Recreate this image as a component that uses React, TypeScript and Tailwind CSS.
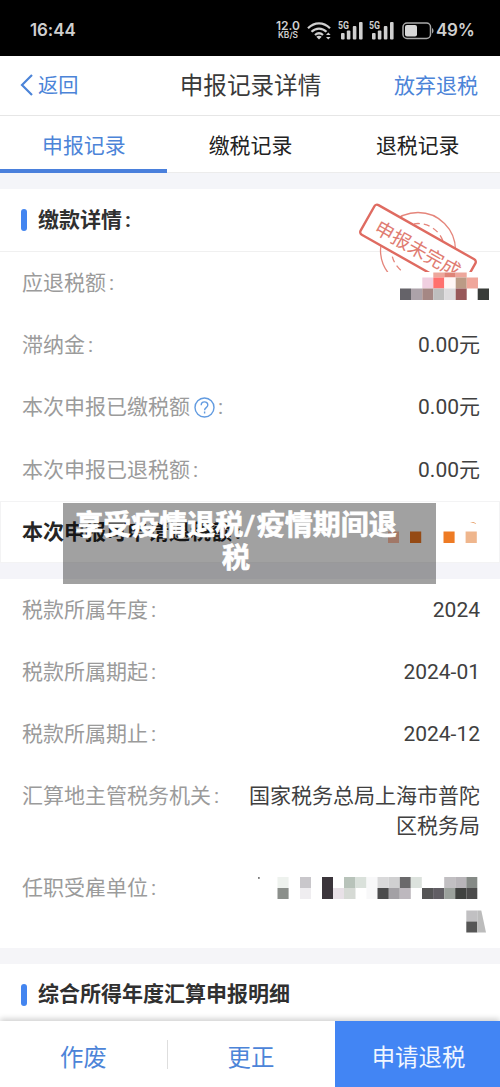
import type { ReactNode } from "react";

type Cell = [x: number, y: number, w: number, h: number, fill: string];

const PAYMENT_CELLS: Cell[] = [
  [33.3, 0, 11, 5, "#eda79c"],
  [44.3, 0, 11.4, 5, "#df8478"],
  [55.7, 0, 11, 5, "#eda79c"],
  [22.3, 5, 11, 11, "#f0cfe0"],
  [33.3, 5, 11, 11, "#ff706e"],
  [44.3, 5, 11.4, 11, "#fff6f5"],
  [55.7, 5, 11, 11, "#bb9b86"],
  [66.7, 5, 11.3, 11, "#f0a79b"],
  [0, 16, 11, 11.5, "#656369"],
  [11, 16, 11.3, 11.5, "#aca2a9"],
  [22.3, 16, 11, 11.5, "#a58784"],
  [33.3, 16, 11, 11.5, "#bebebe"],
  [44.3, 16, 11.4, 11.5, "#dddbdd"],
  [55.7, 16, 11, 11.5, "#98595a"],
  [77.7, 16, 11.3, 11.5, "#393c39"],
];

const COMPANY_CELLS: Cell[] = [
  [19.5, 0, 11.1, 11, "#eef2ee"],
  [42, 0, 11, 11, "#c9c7cb"],
  [64, 0, 11, 22, "#3b353b"],
  [86, 0, 11.5, 11, "#b8c3ba"],
  [97.5, 0, 11, 11, "#dae1db"],
  [108.5, 0, 11, 22, "#f8f8f9"],
  [119.5, 0, 11.3, 11, "#d9d9da"],
  [130.8, 0, 11, 11, "#d0d0d1"],
  [141.8, 0, 11, 11, "#6a696b"],
  [152.8, 0, 11, 11, "#dce2dd"],
  [186.2, 0, 11, 11, "#c1bfc2"],
  [197.2, 0, 11.1, 11, "#b8b5b9"],
  [208.3, 0, 11, 11, "#858a86"],
  [19.5, 11, 11.1, 11, "#8b8f8b"],
  [42, 11, 11, 11, "#efedf0"],
  [75, 11, 11, 11, "#e8e1e7"],
  [86, 11, 11.5, 11, "#d6dad5"],
  [119.5, 11, 11.3, 11, "#4b4b4c"],
  [130.8, 11, 11, 11, "#a3a1a5"],
  [141.8, 11, 11, 11, "#bdb8be"],
  [164, 11, 11.1, 11, "#555556"],
  [175.1, 11, 11.1, 11, "#615e64"],
  [186.2, 11, 11, 11, "#9ba19c"],
  [197.2, 11, 11.1, 11, "#404240"],
  [208.3, 11, 11, 11, "#4b4b4b"],
  [208.3, 33.5, 11, 11, "#c1c0c2"],
  [208.3, 44.5, 11, 11, "#565656"],
];

const REFUND_CELLS: Cell[] = [
  [0, 9.5, 11, 11.5, "#ffbfa5"],
  [22, 9.5, 11.2, 11.5, "#ec7621"],
  [55.5, 9.5, 11.1, 11.5, "#ee7b24"],
  [77.6, 9.5, 11.2, 11.5, "#efb68d"],
];

function Cells({ cells }: { cells: Cell[] }) {
  return (
    <>
      {cells.map(([x, y, width, height, fill], i) => (
        <rect key={i} x={x} y={y} width={width} height={height} fill={fill} />
      ))}
    </>
  );
}

function StatusBar() {
  return (
    <div className="flex h-14 items-center bg-black pt-[5px] pr-[26px] pl-[30px] text-[#cfcfcf]">
      <span className="flex-1 font-[Inter] text-[17px] font-semibold tracking-[-0.1px]">16:44</span>
      <div className="flex items-center">
        <div className="flex w-[26px] flex-col items-center font-[Inter] font-semibold">
          <span className="text-[12px] leading-[10px]">12.0</span>
          <span className="text-[8.4px] leading-[9px]">KB/S</span>
        </div>
        <svg className="ml-1.5" width="25" height="18" viewBox="0 0 25 18" fill="none" stroke="currentColor" strokeWidth="2.2">
          <path d="M1 6.2C7.5-.3 16.5-.3 23 6.2" />
          <path d="M4.5 9.8c4.5-4.3 10.5-4.3 15 0" />
          <path d="M8 13c2.6-2.3 5.4-2.3 8 0" />
          <path d="M9.3 14.7 12 17.4l2.7-2.7c-1.5-1.2-3.9-1.2-5.4 0Z" fill="currentColor" stroke="none" />
          <path d="m19 13 2.3-2.6L23.6 13Zm0 2h4.6l-2.3 2.6Z" fill="currentColor" stroke="none" />
        </svg>
        <Signal />
        <Signal />
        <svg className="ml-2" width="32" height="18" viewBox="0 0 32 18">
          <rect x="1" y="1" width="27.5" height="15.5" rx="4" fill="none" stroke="#a9a9a9" strokeWidth="1.5" />
          <rect x="3" y="3" width="12" height="11.5" rx="2" fill="#d8d8d8" />
          <path d="M30 6c2 1 2 4.5 0 5.5Z" fill="#a9a9a9" />
        </svg>
        <span className="ml-[2px] w-[38px] font-[Inter] text-[17px] font-semibold tracking-[-0.2px]">49%</span>
      </div>
    </div>
  );
}

function Signal() {
  return (
    <svg className="ml-[6px]" width="25" height="19" viewBox="0 0 25 19" fill="currentColor">
      <text x="0" y="8" fontSize="10.5" fontWeight="700" fontFamily="Roboto, sans-serif" textLength="11" lengthAdjust="spacingAndGlyphs">
        5G
      </text>
      <rect x="3" y="12" width="3.6" height="6.5" rx="1" />
      <rect x="8.8" y="9.5" width="3.6" height="9" rx="1" />
      <rect x="14.8" y="5" width="3.6" height="13.5" rx="1" />
      <rect x="21" y="1" width="3.6" height="17.5" rx="1" />
    </svg>
  );
}

function SectionTitle({ children }: { children: ReactNode }) {
  return (
    <div className="flex h-[62px] items-center pl-[21px] text-[21px] font-bold text-[#303030]">
      <span className="mr-[11px] h-[22px] w-[6px] rounded-full bg-[#4385f0]" />
      {children}
    </div>
  );
}

function Row({ label, help, children }: { label: string; help?: boolean; children?: ReactNode }) {
  return (
    <div className="flex min-h-[62px] justify-between py-4 pr-5 pl-[22px] text-[21px] leading-[30px]">
      <div className="flex shrink-0 items-center self-start text-[#9b9b9b]">
        {label}
        {help && (
          <svg className="ml-1" width="21" height="21" viewBox="0 0 21 21" fill="none" stroke="#629be0" strokeWidth="1.4">
            <circle cx="10.5" cy="10.5" r="9.5" />
            <path d="M7.2 8.3c0-4.6 6.6-4.5 6.6-.3 0 2.6-3.2 2.6-3.2 5.2M10.6 14.6v1.9" />
          </svg>
        )}
        <span className="ml-[3px]">:</span>
      </div>
      <div className="text-right text-[#404040]">{children}</div>
    </div>
  );
}

function Stamp() {
  return (
    <svg className="absolute top-[200px] left-[356px]" width="134" height="101" viewBox="0 0 134 101">
      <defs>
        <clipPath id="stamp">
          <rect width="134" height="72" />
        </clipPath>
      </defs>
      <g clipPath="url(#stamp)">
        <g fill="none" stroke="#e5857b" strokeWidth="1.3">
          <circle cx="62" cy="50" r="37.5" />
          <circle cx="62" cy="50" r="26.5" strokeDasharray="6 4" />
        </g>
        <g transform="translate(62 47) rotate(29.5)">
          <rect x="-58" y="-17" width="116" height="34" rx="3" fill="#fff" stroke="#df6b61" strokeWidth="2.4" />
          <text x="1" y="9" textAnchor="middle" fontSize="19" fill="#e07c72">
            申报未完成
          </text>
        </g>
      </g>
      <g transform="translate(44 72.5)">
        <Cells cells={PAYMENT_CELLS} />
      </g>
    </svg>
  );
}

export default function App() {
  return (
    <div className="relative flex h-[1087px] w-[500px] flex-col overflow-hidden bg-white font-[Roboto,'Noto_Sans_CJK_SC',sans-serif]">
      <StatusBar />

      {/* Nav */}
      <header className="grid h-[60px] grid-cols-[1fr_auto_1fr] items-center border-b border-[#e6e6e6] pr-[22px] pl-5 text-[#4c84d8]">
        <div className="flex items-center text-[20.2px]">
          <svg className="mr-[5px]" width="13" height="22" viewBox="0 0 13 22" fill="none" stroke="currentColor" strokeWidth="2.2">
            <path d="M12 1 2 11l10 10" />
          </svg>
          <span className="pt-[2px]">返回</span>
        </div>
        <h1 className="pt-[3px] pl-[3px] text-[23.6px] text-[#3a3a3a]">申报记录详情</h1>
        <span className="pt-[2px] text-right text-[21px]">放弃退税</span>
      </header>

      {/* Tabs */}
      <nav className="grid h-[57px] shrink-0 grid-cols-3 border-b border-[#ececec] text-center text-[20.9px] leading-[61px] text-[#222]">
        <span className="h-[57px] border-b-4 border-[#4a80dc] pl-px text-[#4c84d8]">申报记录</span>
        <span className="pl-px">缴税记录</span>
        <span className="pl-[2px]">退税记录</span>
      </nav>

      <div className="h-4 shrink-0 bg-[#f4f5f9]" />
      <div className="shrink-0 border-b border-[#f0f0f0]">
        <SectionTitle>
          <span className="pt-[2px]">
            缴款详情<span className="ml-[3px]">:</span>
          </span>
        </SectionTitle>
      </div>

      <Row label="应退税额" />
      <Row label="滞纳金">0.00元</Row>
      <Row label="本次申报已缴税额" help>0.00元</Row>
      <div className="pt-px">
        <Row label="本次申报已退税额">0.00元</Row>
      </div>

      <div className="flex h-[62px] shrink-0 items-center justify-between border border-[#f3f3f4] pr-[21px] pl-[21px] text-[21px] font-bold text-[#262626]">
        <span className="pt-px">
          本次申报可申请退税额<span className="ml-[3px]">:</span>
        </span>
        <svg width="90" height="21" viewBox="0 0 90 21">
          <Cells cells={REFUND_CELLS} />
          <path d="M82 0c3-.5 5 .5 6.5 2-2-.8-4-1-6.5-2Z" fill="#e59a60" />
        </svg>
      </div>
      <div className="h-4 shrink-0 bg-[#f4f4f9]" />

      <Row label="税款所属年度">2024</Row>
      <Row label="税款所属期起">2024-01</Row>
      <Row label="税款所属期止">2024-12</Row>
      <Row label="汇算地主管税务机关">
        国家税务总局上海市普陀
        <br />
        区税务局
      </Row>
      <div className="h-[91px] shrink-0">
        <Row label="任职受雇单位">
          <svg className="mt-1 -mr-2" width="230" height="56" viewBox="0 0 230 56">
            <Cells cells={COMPANY_CELLS} />
            <path d="M219.3 33.5h4L228 55.5h-8.7Z" fill="#bcbcbc" />
            <circle cx="0.9" cy="0.9" r="0.9" fill="#555" />
          </svg>
        </Row>
      </div>

      <div className="h-4 shrink-0 bg-[#f5f5f8]" />
      <SectionTitle>综合所得年度汇算申报明细</SectionTitle>

      {/* Actions */}
      <footer className="absolute inset-x-0 bottom-0 grid h-[66px] grid-cols-[167px_168px_165px] items-center bg-white text-center text-[23.4px] text-[#4c84d8] shadow-[0_-2px_6px_rgba(0,0,0,0.2)]">
        <span className="pt-[9px]">作废</span>
        <span className="relative pt-[9px] before:absolute before:top-[8px] before:left-0 before:h-[29px] before:w-px before:bg-[#dedede]">更正</span>
        <span className="flex h-full items-center justify-center bg-[#4285f4] pt-[9px] pl-[2px] text-[#f0f6ff]">申请退税</span>
      </footer>

      <Stamp />

      {/* Caption */}
      <div className="absolute top-[503px] left-[63px] h-[81px] w-[373px] bg-black/37 pr-[27px] text-center text-[28px] leading-[33px] font-bold text-white [-webkit-text-stroke:0.7px_white]">
        <p className="pt-[6px]">
          享受疫情退税<span className="ml-px mr-[1.5px] font-medium">/</span>疫情期间退
          <br />税
        </p>
      </div>
    </div>
  );
}
